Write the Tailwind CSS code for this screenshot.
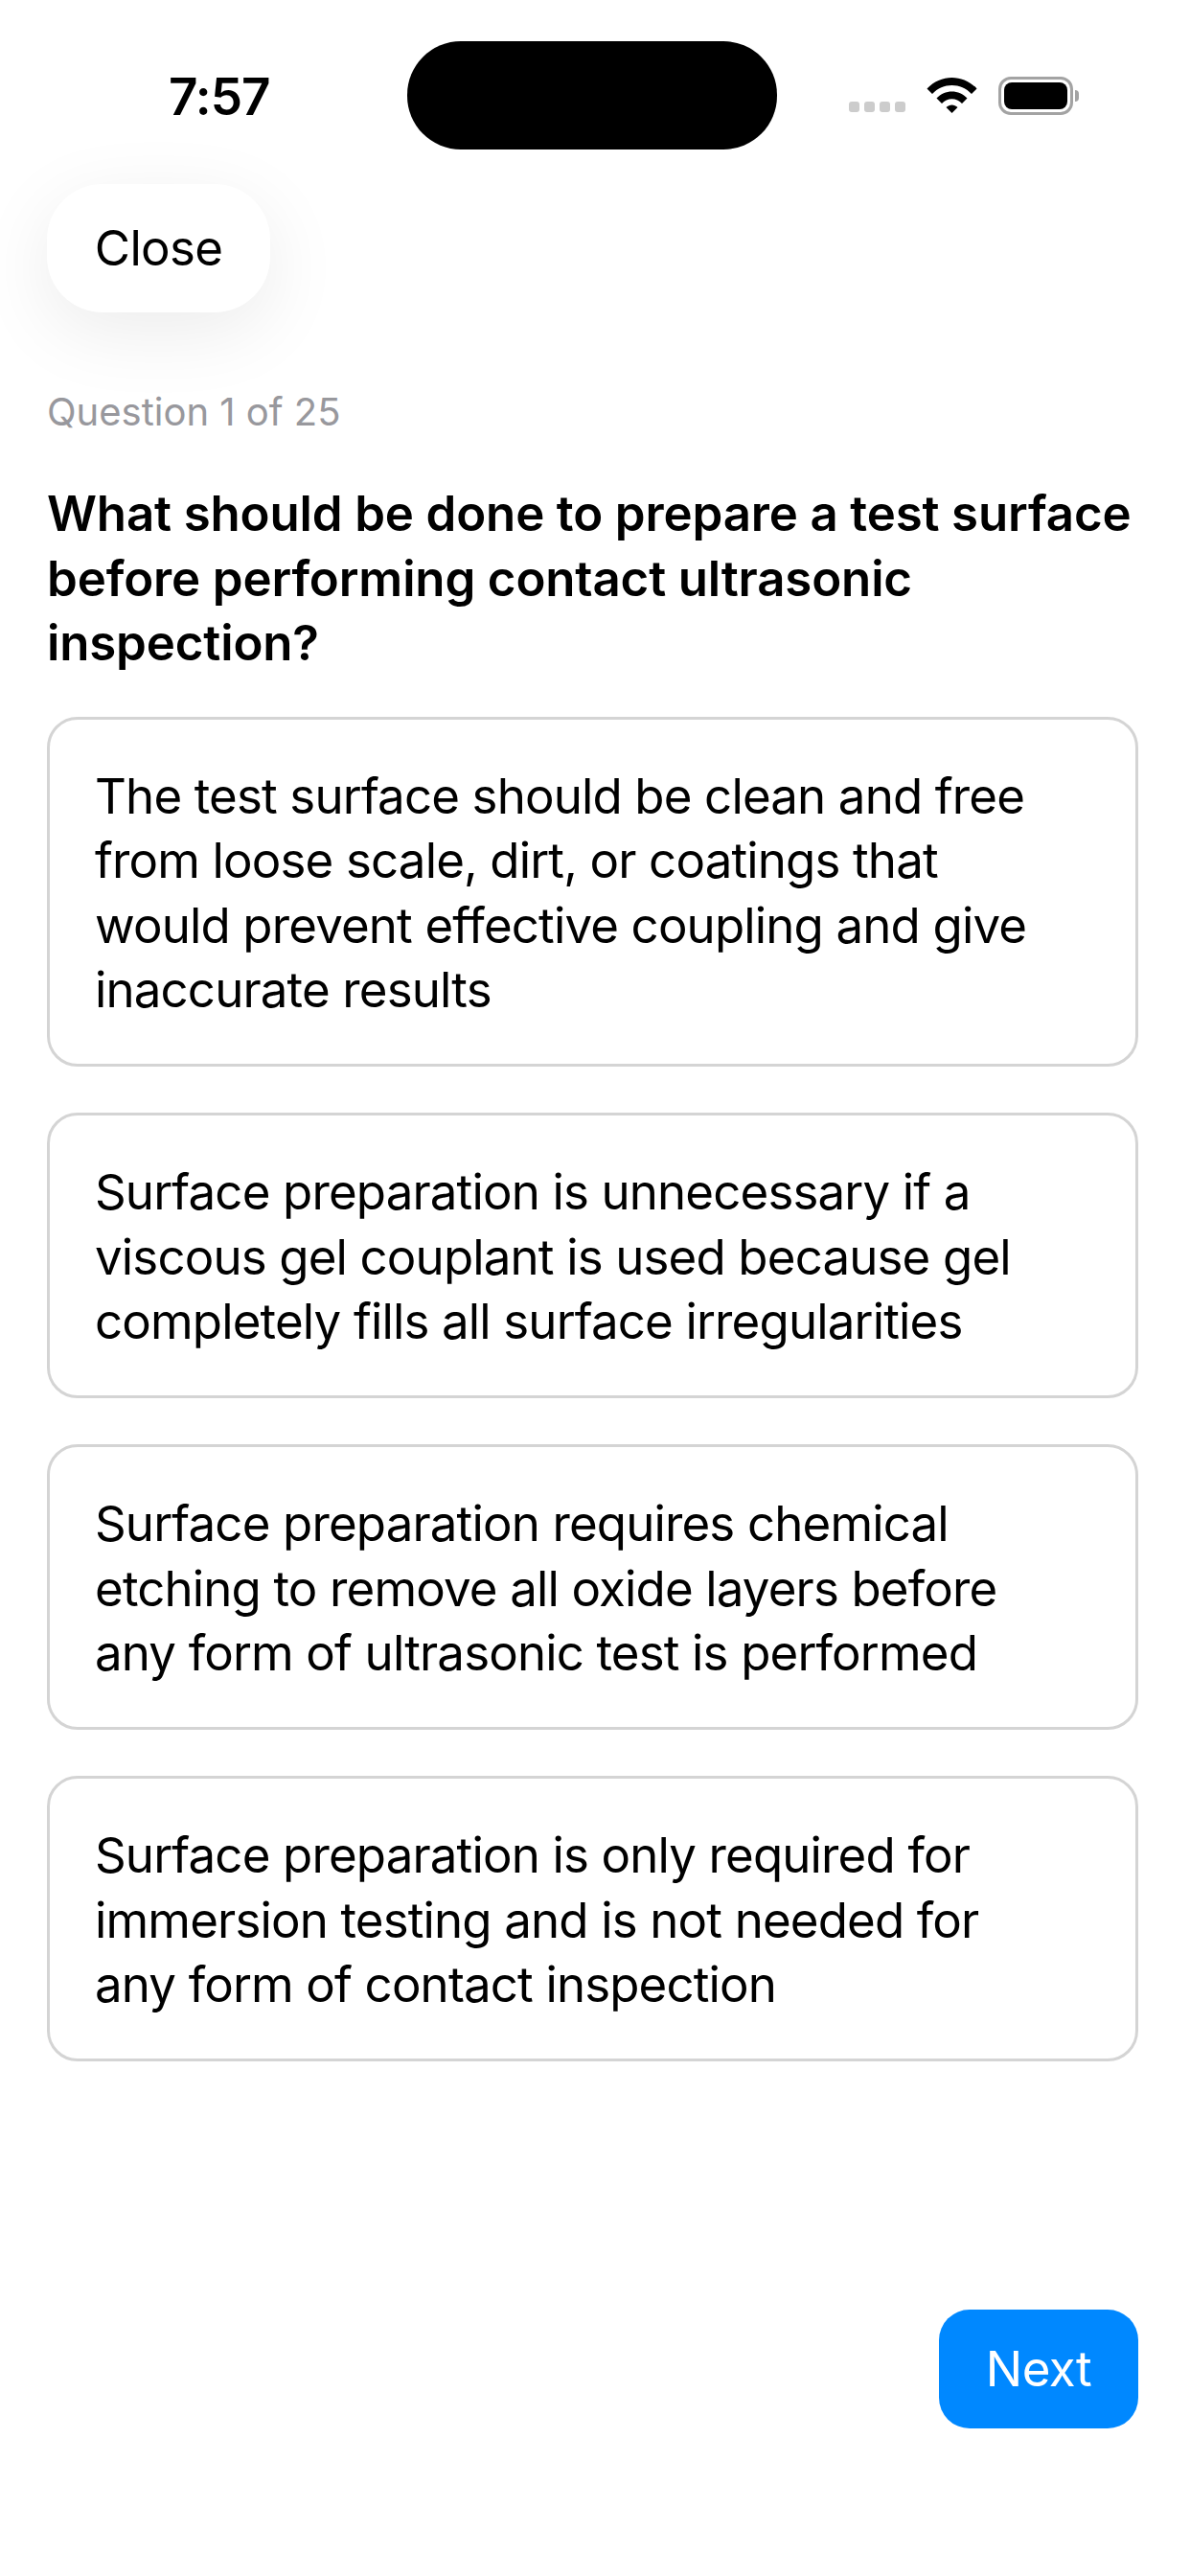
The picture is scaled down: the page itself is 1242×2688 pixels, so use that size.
<!DOCTYPE html>
<html lang="en">
<head>
  <meta charset="UTF-8" />
  <title>Quiz</title>
  <script src="https://cdn.jsdelivr.net/npm/@tailwindcss/browser@4"></script>
  <meta name="viewport" content="width=device-width, initial-scale=1.0" />
</head>
<body class="w-[1242px] h-[2688px] bg-white text-black font-['Inter','Liberation_Sans',sans-serif] overflow-hidden">

  <!-- Status bar -->
  <div class="h-[192px] pt-[43px] pl-[176px] flex items-start">
    <span class="w-[249px] pt-[31px] text-[53px] leading-[75px] font-semibold tracking-[-1px] -mt-[10px]">7:57</span>
    <div class="w-[386px] h-[113px] rounded-[56px] bg-black"></div>
    <div class="ml-[75px] pt-[37px] flex items-center">
      <div class="flex gap-[5px] mt-[22px]">
        <span class="w-[11px] h-[11px] rounded-[3px] bg-[#cccccc]"></span>
        <span class="w-[11px] h-[11px] rounded-[3px] bg-[#cccccc]"></span>
        <span class="w-[11px] h-[11px] rounded-[3px] bg-[#cccccc]"></span>
        <span class="w-[11px] h-[11px] rounded-[3px] bg-[#cccccc]"></span>
      </div>
      <svg class="ml-[22px] -mt-[2px]" width="53" height="38" viewBox="0 0 52 38">
        <path d="M0 12.5C14-3 38-3 52 12.500L46.500 18C35.500 6 16.500 6 5.500 18Z" fill="#000" />
        <path d="M10 22.500C18.500 13 33.500 13 42 22.500L36.500 28C31 21.500 21 21.500 15.500 28Z" fill="#000" />
        <path d="M20 32C23.500 28.500 28.500 28.500 32 32L26 38Z" fill="#000" />
      </svg>
      <div class="ml-[22px] w-[78px] h-[40px] rounded-[13px] border-[3px] border-[#a3a3a3] p-[3px]">
        <div class="w-full h-full rounded-[8px] bg-black"></div>
      </div>
      <div class="ml-[2px] w-[4px] h-[12px] rounded-r-[4px] bg-[#a3a3a3]"></div>
    </div>
  </div>

  <main class="px-[49px]">
    <button class="w-[233px] h-[134px] rounded-[58px] bg-white text-[51px] tracking-[-0.7px] shadow-[0_20px_80px_rgba(0,0,0,0.08)]">Close</button>

    <p class="mt-[79px] text-[40px] leading-[50px] text-[#98989d]">Question 1 of 25</p>

    <h1 class="mt-[47px] w-[1160px] text-[51px] leading-[67.500px] font-semibold tracking-[-0.15px]">What should be done to prepare a test surface before performing contact ultrasonic inspection?</h1>

    <div class="mt-[43px] flex flex-col gap-[48px] tracking-[-0.85px]">
      <div class="w-[1139px] rounded-[32px] border-[3px] border-[#d4d4d4] pl-[47px] pr-[83px] pt-[46px] pb-[43.500px] text-[51px] leading-[67.500px]">The test surface should be clean and free from loose scale, dirt, or coatings that would prevent effective coupling and give inaccurate results</div>
      <div class="w-[1139px] rounded-[32px] border-[3px] border-[#d4d4d4] pl-[47px] pr-[83px] pt-[46px] pb-[43.500px] text-[51px] leading-[67.500px]">Surface preparation is unnecessary if a viscous gel couplant is used because gel completely fills all surface irregularities</div>
      <div class="w-[1139px] rounded-[32px] border-[3px] border-[#d4d4d4] pl-[47px] pr-[83px] pt-[46px] pb-[43.500px] text-[51px] leading-[67.500px]">Surface preparation requires chemical etching to remove all oxide layers before any form of ultrasonic test is performed</div>
      <div class="w-[1139px] rounded-[32px] border-[3px] border-[#d4d4d4] pl-[47px] pr-[83px] pt-[46px] pb-[43.500px] text-[51px] leading-[67.500px]">Surface preparation is only required for immersion testing and is not needed for any form of contact inspection</div>
    </div>

    <div class="mt-[259px] w-[1139px] flex justify-end">
      <button class="w-[208px] h-[124px] rounded-[32px] bg-[#0088ff] text-white text-[51px] tracking-[-0.5px]">Next</button>
    </div>
  </main>
</body>
</html>
